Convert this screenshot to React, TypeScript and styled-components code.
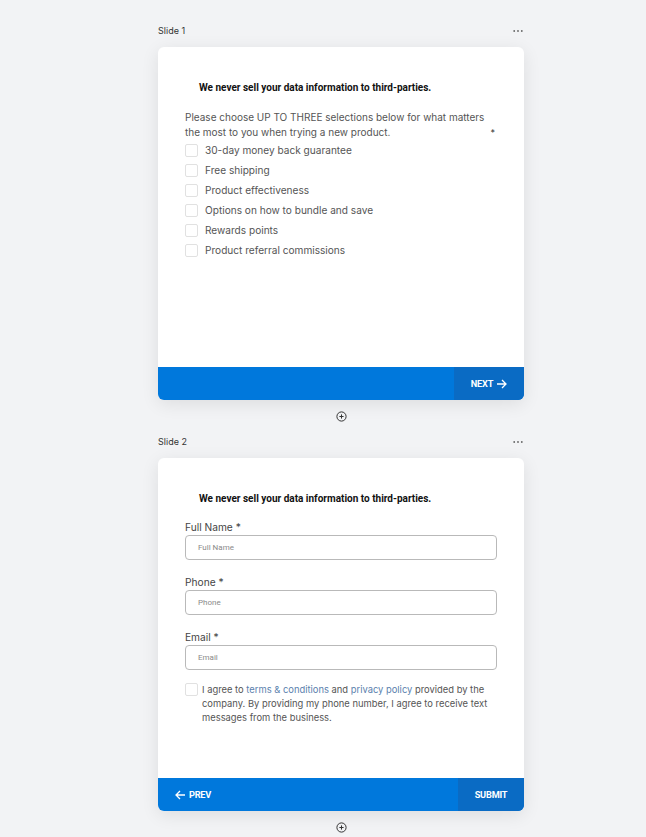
import React from 'react';
import styled, { createGlobalStyle } from 'styled-components';

const GlobalStyle = createGlobalStyle`
    html, body {
        margin: 0;
        padding: 0;
        background: #f2f3f5;
    }
    body {
        font-family: Inter, "Noto Sans", sans-serif;
        color: #333;
    }
`;

const Page = styled.div`
    padding: 21px 0 0 158px;
    width: 366px;
`;

const SlideHeader = styled.div`
    height: 19px;
    display: flex;
    align-items: center;
    justify-content: space-between;
    margin-bottom: 7px;
    font-size: 9px;
    color: #333;
`;

const Dots = styled.svg`
    width: 10px;
    height: 4px;
    margin-right: 1px;
`;

const Card = styled.div`
    background: #fff;
    border-radius: 6px;
    box-shadow: 0 4px 18px rgba(0, 0, 0, 0.09);
    overflow: hidden;
`;

const Body = styled.div`
    height: 320px;
    box-sizing: border-box;
    padding: 34px 27px 0 27px;
`;

const Notice = styled.div`
    font-family: Roboto, "Liberation Sans", sans-serif;
    font-weight: 700;
    font-size: 10px;
    line-height: 14px;
    color: #111;
    margin-left: 14px;
`;

const Question = styled.div`
    display: flex;
    margin-top: 15px;
    font-size: 10px;
    line-height: 15px;
    color: #555;
`;

const QuestionText = styled.div`
    width: 306px;
`;

const Required = styled.span`
    align-self: flex-end;
    margin-left: auto;
    margin-right: 2px;
    font-size: 9px;
    color: #333;
`;

const OptionList = styled.div`
    display: flex;
    flex-direction: column;
`;

const OptionRow = styled.label`
    height: 20px;
    display: flex;
    align-items: center;
    gap: 7px;
    font-size: 10.1px;
    color: #555;
`;

const Box = styled.span`
    width: 13px;
    height: 13px;
    border: 1px solid #e1e1e1;
    border-radius: 2px;
    box-sizing: border-box;
    flex-shrink: 0;
`;

const FieldLabel = styled.div<{ $first?: boolean }>`
    margin-top: ${(p) => (p.$first ? '14px' : '15px')};
    font-size: 10.2px;
    line-height: 14px;
    color: #444;
`;

const Input = styled.div`
    margin-top: 1px;
    height: 25px;
    box-sizing: border-box;
    border: 1px solid #b9b9b9;
    border-radius: 4px;
    padding-left: 12px;
    display: flex;
    align-items: center;
    font-family: Roboto, "Liberation Sans", sans-serif;
    font-size: 8px;
    color: #8a8a8a;
`;

const Consent = styled.div`
    display: flex;
    gap: 4px;
    margin-top: 13px;
    font-size: 9.4px;
    line-height: 14px;
    color: #555;
`;

const ConsentText = styled.p`
    margin: 0;
`;

const Link = styled.span`
    color: #5b7fae;
`;

const Footer = styled.div`
    height: 33px;
    background: #0078dc;
    display: flex;
    justify-content: space-between;
    align-items: stretch;
`;

const NavButton = styled.div<{ $dark?: boolean; $width: number }>`
    width: ${(p) => p.$width}px;
    background: ${(p) => (p.$dark ? '#0a6bc4' : 'transparent')};
    display: flex;
    align-items: center;
    justify-content: center;
    gap: 3px;
    font-family: Roboto, "Liberation Sans", sans-serif;
    font-weight: 700;
    font-size: 9.2px;
    letter-spacing: -0.2px;
    color: #fff;
`;

const AddRow = styled.div`
    height: 32px;
    display: flex;
    align-items: center;
    justify-content: center;
`;

const Arrow = ({ dir }: { dir: 'left' | 'right' }) => (
    <svg width="11" height="10" viewBox="0 0 11 10" fill="none">
        {dir === 'right' ? (
            <path d="M1 5h9M6 1l4 4-4 4" stroke="#fff" strokeWidth="1.3" />
        ) : (
            <path d="M10 5H1M5 1L1 5l4 4" stroke="#fff" strokeWidth="1.3" />
        )}
    </svg>
);

const AddIcon = () => (
    <svg width="11" height="11" viewBox="0 0 11 11" fill="none">
        <circle cx="5.5" cy="5.5" r="4.6" stroke="#333" strokeWidth="1" />
        <path d="M5.5 3.4v4.2M3.4 5.5h4.2" stroke="#333" strokeWidth="1" />
    </svg>
);

const Slide = ({
    title,
    children,
    footer,
}: {
    title: string;
    children: React.ReactNode;
    footer: React.ReactNode;
}) => (
    <>
        <SlideHeader>
            <span>{title}</span>
            <Dots viewBox="0 0 10 4">
                <circle cx="1.2" cy="2" r="0.9" fill="#666" />
                <circle cx="5" cy="2" r="0.9" fill="#666" />
                <circle cx="8.8" cy="2" r="0.9" fill="#666" />
            </Dots>
        </SlideHeader>
        <Card>
            <Body>{children}</Body>
            <Footer>{footer}</Footer>
        </Card>
        <AddRow>
            <AddIcon />
        </AddRow>
    </>
);

const options = [
    '30-day money back guarantee',
    'Free shipping',
    'Product effectiveness',
    'Options on how to bundle and save',
    'Rewards points',
    'Product referral commissions',
];

const fields = ['Full Name', 'Phone', 'Email'];

export default function App() {
    return (
        <Page>
            <GlobalStyle />
            <Slide
                title="Slide 1"
                footer={
                    <>
                        <span />
                        <NavButton $dark $width={70}>
                            NEXT <Arrow dir="right" />
                        </NavButton>
                    </>
                }
            >
                <Notice>We never sell your data information to third-parties.</Notice>
                <Question>
                    <QuestionText>
                        Please choose UP TO THREE selections below for what matters
                        the most to you when trying a new product.
                    </QuestionText>
                    <Required>*</Required>
                </Question>
                <OptionList>
                    {options.map((o) => (
                        <OptionRow key={o}>
                            <Box />
                            {o}
                        </OptionRow>
                    ))}
                </OptionList>
            </Slide>
            <Slide
                title="Slide 2"
                footer={
                    <>
                        <NavButton $width={70}>
                            <Arrow dir="left" /> PREV
                        </NavButton>
                        <NavButton $dark $width={66}>
                            SUBMIT
                        </NavButton>
                    </>
                }
            >
                <Notice>We never sell your data information to third-parties.</Notice>
                {fields.map((f, i) => (
                    <React.Fragment key={f}>
                        <FieldLabel $first={i === 0}>{f} *</FieldLabel>
                        <Input>{f}</Input>
                    </React.Fragment>
                ))}
                <Consent>
                    <Box />
                    <ConsentText>
                        I agree to <Link>terms &amp; conditions</Link> and{' '}
                        <Link>privacy policy</Link> provided by the company. By
                        providing my phone number, I agree to receive text
                        messages from the business.
                    </ConsentText>
                </Consent>
            </Slide>
        </Page>
    );
}
